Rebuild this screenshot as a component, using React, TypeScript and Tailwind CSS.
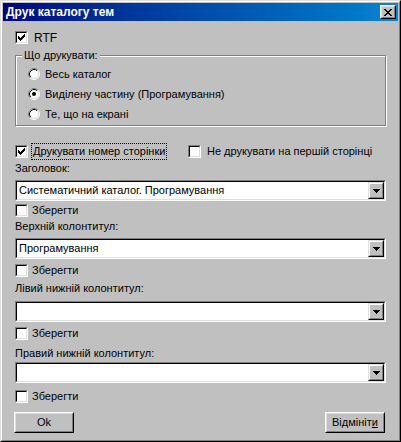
import React from "react";

const raised =
  "box-border border border-t-white border-l-white border-r-black border-b-black";
const raisedInner =
  "box-border border border-t-[#dfdfdf] border-l-[#dfdfdf] border-r-[#808080] border-b-[#808080]";
const sunken =
  "box-border border border-t-[#808080] border-l-[#808080] border-r-white border-b-white";
const sunkenInner =
  "box-border border border-t-black border-l-black border-r-[#dfdfdf] border-b-[#dfdfdf]";

function CheckMark() {
  return (
    <svg width="7" height="7" viewBox="0 0 7 7" shapeRendering="crispEdges">
      <path
        fill="#000"
        d="M6 0h1v1h-1z M5 1h2v1h-2z M0 2h1v1h-1z M4 2h3v1h-3z M0 3h2v1h-2z M3 3h3v1h-3z M0 4h5v1h-5z M1 5h3v1h-3z M2 6h1v1h-1z"
      />
    </svg>
  );
}

function CheckBox({ checked = false }: { checked?: boolean }) {
  return (
    <span className={"flex h-[13px] w-[13px] shrink-0 " + sunken}>
      <span className={"flex flex-1 items-center justify-center bg-white " + sunkenInner}>
        {checked ? <CheckMark /> : null}
      </span>
    </span>
  );
}

function Radio({ checked = false }: { checked?: boolean }) {
  return (
    <svg width="12" height="12" viewBox="0 0 12 12" className="shrink-0">
      <circle cx="6" cy="6" r="5" fill="#fff" />
      <path d="M2.11 9.89 A5.5 5.5 0 0 1 9.89 2.11" fill="none" stroke="#808080" />
      <path d="M9.89 2.11 A5.5 5.5 0 0 1 2.11 9.89" fill="none" stroke="#fff" />
      <path d="M2.82 9.18 A4.5 4.5 0 0 1 9.18 2.82" fill="none" stroke="#000" />
      <path d="M9.18 2.82 A4.5 4.5 0 0 1 2.82 9.18" fill="none" stroke="#dfdfdf" />
      {checked ? <circle cx="6" cy="6" r="2" fill="#000" /> : null}
    </svg>
  );
}

function Combo({ value = "" }: { value?: string }) {
  return (
    <div className={"flex h-[21px] w-full " + sunken}>
      <div className={"flex flex-1 items-center bg-white " + sunkenInner}>
        <span className="flex-1 truncate pl-[2px] leading-[13px]">{value}</span>
        <span className={"flex h-full w-[16px] " + raised.replace("border-t-white border-l-white", "border-t-[#dfdfdf] border-l-[#dfdfdf]")}>
          <span className="box-border flex flex-1 items-center justify-center border border-t-white border-l-white border-r-[#808080] border-b-[#808080] bg-[#c0c0c0]">
            <svg width="7" height="4" viewBox="0 0 7 4" shapeRendering="crispEdges">
              <path fill="#000" d="M0 0h7v1h-7z M1 1h5v1h-5z M2 2h3v1h-3z M3 3h1v1h-1z" />
            </svg>
          </span>
        </span>
      </div>
    </div>
  );
}

function Save({ className = "" }: { className?: string }) {
  return (
    <div className={"flex h-[18px] items-center gap-[4px] " + className}>
      <CheckBox />
      <span>Зберегти</span>
    </div>
  );
}

function Button({ children, className = "" }: { children: React.ReactNode; className?: string }) {
  return (
    <div className={"flex h-[21px] w-[60px] " + raised + " " + className}>
      <div className={"flex flex-1 items-center justify-center " + raisedInner}>{children}</div>
    </div>
  );
}

export default function App() {
  return (
    <div className="h-[442px] w-[401px] bg-[#c0c0c0] font-['Liberation_Sans',Arial,sans-serif] text-[11px] text-black">
      <div className="box-border flex h-full w-full border border-t-[#dfdfdf] border-l-[#dfdfdf] border-r-black border-b-black">
        <div className="box-border flex flex-1 flex-col border border-t-white border-l-white border-r-[#808080] border-b-[#808080] p-[1px]">
          {/* title bar */}
          <div className="flex h-[18px] items-center justify-between bg-linear-to-r from-[#000080] to-[#1084d0] pl-[3px] pr-[2px]">
            <span className="text-[12px] leading-[14px] font-bold text-white">Друк каталогу тем</span>
            <span className={"flex h-[14px] w-[16px] " + raised}>
              <span className={"flex flex-1 items-center justify-center bg-[#c0c0c0] " + raisedInner}>
                <svg width="8" height="7" viewBox="0 0 8 7" shapeRendering="crispEdges">
                  <path
                    fill="#000"
                    d="M0 0h2v1h-2z M6 0h2v1h-2z M1 1h2v1h-2z M5 1h2v1h-2z M2 2h4v1h-4z M3 3h2v1h-2z M2 4h4v1h-4z M1 5h2v1h-2z M5 5h2v1h-2z M0 6h2v1h-2z M6 6h2v1h-2z"
                  />
                </svg>
              </span>
            </span>
          </div>

          <div className="flex flex-col px-[12px]">
            <div className="mt-[10px] flex h-[13px] items-center gap-[6px]">
              <CheckBox checked />
              <span className="text-[12px]">RTF</span>
            </div>

            {/* group box */}
            <div className="relative mt-[11px] box-border h-[71px] border border-[#808080] pt-[8px] pl-[12px] shadow-[inset_1px_1px_0_#fff,1px_1px_0_#fff]">
              <span className="absolute -top-[8px] left-[6px] bg-[#c0c0c0] px-[2px] leading-[14px]">
                Що друкувати:
              </span>
              <div className="flex h-[20px] items-center gap-[5px]">
                <Radio />
                <span>Весь каталог</span>
              </div>
              <div className="flex h-[20px] items-center gap-[5px]">
                <Radio checked />
                <span>Виділену частину (Програмування)</span>
              </div>
              <div className="flex h-[20px] items-center gap-[5px]">
                <Radio />
                <span>Те, що на екрані</span>
              </div>
            </div>

            <div className="mt-[15px] flex h-[20px] items-center">
              <div className="flex w-[173px] items-center gap-[3px]">
                <CheckBox checked />
                <span className="border border-dotted border-black px-[1px] leading-[15px]">
                  Друкувати номер сторінки
                </span>
              </div>
              <div className="flex items-center gap-[6px]">
                <CheckBox />
                <span>Не друкувати на першій сторінці</span>
              </div>
            </div>

            <div className="h-[14px] leading-[14px]">Заголовок:</div>
            <div className="mt-[5px]">
              <Combo value="Систематичний каталог. Програмування" />
            </div>
            <Save />

            <div className="h-[14px] leading-[14px]">Верхній колонтитул:</div>
            <div className="mt-[5px]">
              <Combo value="Програмування" />
            </div>
            <Save className="mt-[2px]" />

            <div className="mt-[2px] h-[14px] leading-[14px]">Лівий нижній колонтитул:</div>
            <div className="mt-[6px]">
              <Combo />
            </div>
            <Save className="mt-[2px]" />

            <div className="mt-[4px] h-[14px] leading-[14px]">Правий нижній колонтитул:</div>
            <div className="mt-[2px]">
              <Combo />
            </div>
            <Save className="mt-[4px]" />

            <div className="mt-[7px] flex items-center justify-between">
              <Button className="-ml-px">Ok</Button>
              <Button className="mr-px">
                <span>
                  Відмініт<span className="underline">и</span>
                </span>
              </Button>
            </div>
          </div>
        </div>
      </div>
    </div>
  );
}
